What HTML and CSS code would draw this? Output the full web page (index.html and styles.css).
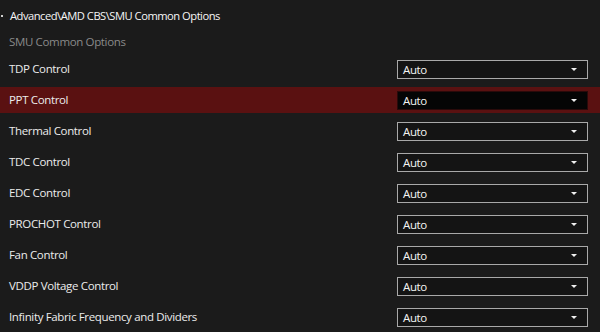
FILE: index.html
```html
<!DOCTYPE html>
<html lang="en">
<head>
    <meta charset="UTF-8">
    <meta name="viewport" content="width=device-width, initial-scale=1.0">
    <title>SMU Common Options</title>
    <link rel="stylesheet" href="styles.css">
</head>
<body>
    <div class="path"><span class="dot"></span>Advanced\AMD CBS\SMU Common Options</div>
    <div class="section">SMU Common Options</div>
    <div class="options">
        <div class="row"><span class="label">TDP Control</span><div class="select">Auto<span class="arrow"></span></div></div>
        <div class="row active"><span class="label">PPT Control</span><div class="select">Auto<span class="arrow"></span></div></div>
        <div class="row"><span class="label">Thermal Control</span><div class="select">Auto<span class="arrow"></span></div></div>
        <div class="row"><span class="label">TDC Control</span><div class="select">Auto<span class="arrow"></span></div></div>
        <div class="row"><span class="label">EDC Control</span><div class="select">Auto<span class="arrow"></span></div></div>
        <div class="row"><span class="label">PROCHOT Control</span><div class="select">Auto<span class="arrow"></span></div></div>
        <div class="row"><span class="label">Fan Control</span><div class="select">Auto<span class="arrow"></span></div></div>
        <div class="row"><span class="label">VDDP Voltage Control</span><div class="select">Auto<span class="arrow"></span></div></div>
        <div class="row"><span class="label">Infinity Fabric Frequency and Dividers</span><div class="select">Auto<span class="arrow"></span></div></div>
    </div>
</body>
</html>
```

FILE: styles.css
```css
body, html {
    margin: 0;
    padding: 0;
    height: 100%;
    background-color: #1b1b1b;
    color: #ececec;
    font-family: "Open Sans", "Noto Sans", sans-serif;
    font-size: 11.5px;
    letter-spacing: -0.35px;
    overflow: hidden;
}
.path {
    height: 31px;
    display: flex;
    align-items: center;
    padding-left: 1px;
    font-size: 11.2px;
    letter-spacing: -0.5px;
    color: #f6f6f6;
}
.dot {
    width: 2px;
    height: 2px;
    background-color: #cfcfcf;
    margin-right: 7px;
}
.section {
    height: 20px;
    display: flex;
    align-items: center;
    padding-left: 9px;
    color: #8a8a8a;
    margin-bottom: 5px;
}
.options {
    display: flex;
    flex-direction: column;
    gap: 5px;
}
.row {
    height: 26px;
    display: flex;
    align-items: center;
    justify-content: space-between;
    padding-left: 9px;
    padding-right: 12px;
}
.label {
    margin-top: -2px;
}
.row.active {
    background-color: #5a1111;
}
.select {
    width: 174px;
    height: 17px;
    border: 1px solid #a9a9a9;
    background-color: #141414;
    display: flex;
    align-items: center;
    justify-content: space-between;
    padding: 0 10px 0 5px;
    color: #f4f4f4;
}
.row.active .select {
    border-color: #2a0a0a;
    background-color: #050505;
}
.arrow {
    width: 0;
    height: 0;
    border-left: 3.5px solid transparent;
    border-right: 3.5px solid transparent;
    border-top: 3.5px solid #f0f0f0;
}
```
